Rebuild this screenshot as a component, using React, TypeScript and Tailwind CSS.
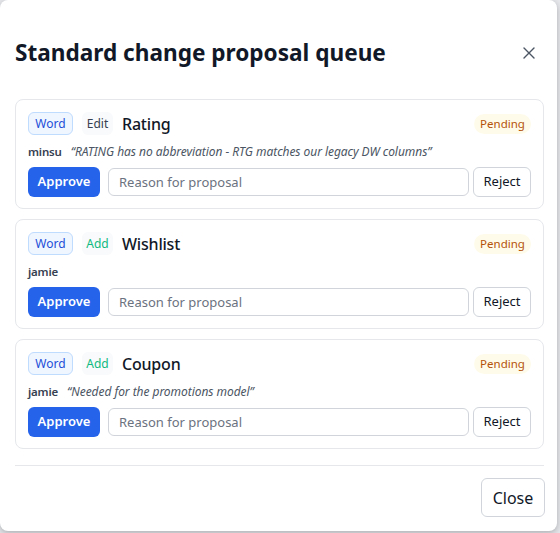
import React from "react";

type Item = {
  kind: string;
  action: "Edit" | "Add";
  name: string;
  user: string;
  note?: string;
};

const items: Item[] = [
  { kind: "Word", action: "Edit", name: "Rating", user: "minsu", note: "\u201cRATING has no abbreviation - RTG matches our legacy DW columns\u201d" },
  { kind: "Word", action: "Add", name: "Wishlist", user: "jamie" },
  { kind: "Word", action: "Add", name: "Coupon", user: "jamie", note: "\u201cNeeded for the promotions model\u201d" },
];

function Card({ item }: { item: Item }) {
  return (
    <div className="rounded-lg border border-[#e5e7eb] bg-white pt-3 pb-[11px] px-3">
      <div className="flex items-center h-[23px]">
        <span className="h-[23px] w-[45px] justify-center flex items-center rounded-md border border-[#bfdbfe] bg-[#eff6ff] text-[12px] text-[#1d4ed8]">
          {item.kind}
        </span>
        <span
          className={
            "ml-[9px] h-[23px] w-[31px] justify-center flex items-center rounded-md bg-[#f9fafb] text-[12px] " +
            (item.action === "Edit" ? "text-[#374151]" : "text-[#10b981]")
          }
        >
          {item.action}
        </span>
        <span className="ml-[9px] text-[16px] font-medium text-[#111827] tracking-[-0.2px]">{item.name}</span>
        <span className="ml-auto h-[20px] w-[57px] justify-center flex items-center rounded-full bg-[#fffbeb] text-[11.5px] text-[#b45309]">
          Pending
        </span>
      </div>
      <div className="mt-[9px] h-4 flex items-center text-[12px]">
        <span className="font-semibold text-[11.5px] text-[#374151] tracking-[-0.2px]">{item.user}</span>
        {item.note && <span className="ml-[9px] italic text-[#4b5563] tracking-[-0.05px]">{item.note}</span>}
      </div>
      <div className="mt-[7px] flex items-center gap-2 h-[30px]">
        <button className="h-[30px] w-[72px] rounded-md bg-[#2563eb] text-white text-[13px] font-semibold">
          Approve
        </button>
        <input
          className="flex-1 h-[28px] rounded-md border border-[#d1d5db] px-[10px] text-[13px] text-[#111827] placeholder:text-[#6b7280] outline-none"
          placeholder="Reason for proposal"
        />
        <button className="-ml-1 h-[30px] w-[58px] rounded-md border border-[#d1d5db] bg-white text-[13px] text-[#111827]">
          Reject
        </button>
      </div>
    </div>
  );
}

export default function App() {
  return (
    <div
      className="w-[560px] h-[533px] bg-[#e5e7eb] overflow-hidden"
      style={{ fontFamily: '"Noto Sans", "Open Sans", sans-serif' }}
    >
      <div className="w-[557px] h-[531px] bg-white rounded-lg shadow-[0_2px_6px_rgba(0,0,0,0.25)] flex flex-col">
        <div className="flex items-center justify-between pl-[15px] pr-[22px] pt-[34px] h-[99px] pb-[27px]">
          <h2 className="text-[22.6px] font-bold text-[#111827] leading-[32px]">Standard change proposal queue</h2>
          <svg width="12" height="12" viewBox="0 0 12 12" className="text-[#4b5563]">
            <path d="M1 1L11 11M11 1L1 11" stroke="currentColor" strokeWidth="1.4" strokeLinecap="round" />
          </svg>
        </div>
        <div className="px-[15px] flex flex-col gap-[10px] pr-[13px]">
          {items.map((it) => (
            <Card key={it.name} item={it} />
          ))}
        </div>
        <div className="mx-[15px] mr-[13px] mt-4 border-t border-[#e5e7eb]" />
        <div className="flex justify-end pr-[12px] pt-3">
          <button className="h-[39px] w-[64px] rounded-md border border-[#d1d5db] bg-white text-[16px] text-[#111827]">
            Close
          </button>
        </div>
      </div>
    </div>
  );
}
